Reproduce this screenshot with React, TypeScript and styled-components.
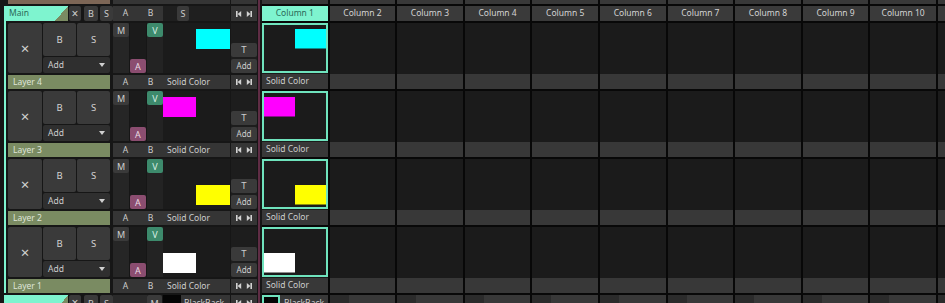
import styled, { createGlobalStyle } from "styled-components";

const mint = "#7ef4cf";
const mintEdge = "#6fe3bd";
const olive = "#7a8b62";
const keyGray = "#3a3a3a";
const barGray = "#353535";

const GlobalStyle = createGlobalStyle`
  body {
    margin: 0;
    background: #161616;
    overflow: hidden;
  }
`;

const Page = styled.div`
  display: flex;
  width: 945px;
  height: 303px;
  overflow: hidden;
  background: #161616;
  color: #cdcdcd;
  font-family: "Noto Sans", "Open Sans", sans-serif;
  font-size: 8.5px;
  line-height: 1;
`;

const LayerSide = styled.div`
  flex: 0 0 257px;
  display: flex;
  flex-direction: column;
  gap: 2px;
  overflow: hidden;
`;

const Divider = styled.div`
  flex: 0 0 2px;
  margin: 0 2px 0 1px;
  background: #5f2d45;
`;

const ClipSide = styled.div`
  flex: 1;
  min-width: 0;
  display: flex;
  flex-direction: column;
  gap: 2px;
  background: #080808;
  overflow: hidden;
`;

const Group = styled.div`
  flex-shrink: 0;
  margin-left: 4px;
  border-left: 2px solid ${mint};
  display: flex;
  flex-direction: column;
  gap: 2px;
`;

const LayerGrid = styled.div<{ $first?: number; $h?: number }>`
  flex-shrink: 0;
  display: grid;
  grid-template-columns: ${(p) => p.$first ?? 105}px 50px 68px 26px;
  ${(p) => (p.$h ? `height: ${p.$h}px; overflow: hidden;` : "")}
`;

const TopStrip = styled(LayerGrid)`
  padding-left: 8px;
`;

const LayerRow = styled(LayerGrid)`
  grid-template-rows: 50px 14px;
  row-gap: 2px;
  padding-left: 2px;
`;

/* layer controls */
const Controls = styled.div`
  display: grid;
  grid-template-columns: 34px 33px 33px;
  grid-template-rows: 33px 16px;
  gap: 1px;
  margin-right: 3px;
`;

const Key = styled.div<{ $tall?: boolean }>`
  grid-row: ${(p) => (p.$tall ? "span 2" : "auto")};
  display: flex;
  align-items: center;
  justify-content: center;
  background: ${keyGray};
  border-radius: 2px;
  font-size: ${(p) => (p.$tall ? "15px" : "9.5px")};
  color: #d2d2d2;
`;

const Select = styled.div`
  grid-column: 2 / span 2;
  display: flex;
  align-items: center;
  justify-content: space-between;
  padding: 0 5px;
  background: #2f2f2f;
  border-radius: 2px;
`;

const Caret = styled.span`
  width: 0;
  height: 0;
  border-left: 3px solid transparent;
  border-right: 3px solid transparent;
  border-top: 4px solid #d0d0d0;
`;

const Mixer = styled.div`
  display: grid;
  grid-template-columns: 16px 16px 16px;
  gap: 1px;
`;

const Strip = styled.div<{ $bg: string; $end?: boolean }>`
  display: flex;
  flex-direction: column;
  justify-content: ${(p) => (p.$end ? "flex-end" : "flex-start")};
  background: ${(p) => p.$bg};
`;

const Toggle = styled.div<{ $bg: string; $fg?: string }>`
  height: 14px;
  display: flex;
  align-items: center;
  justify-content: center;
  background: ${(p) => p.$bg};
  color: ${(p) => p.$fg ?? "#cfcfcf"};
  border-radius: 2px;
  font-size: 9px;
`;

const Preview = styled.div`
  margin-right: 1px;
  background: #1b1b1b;
  svg {
    display: block;
  }
`;

const Side = styled.div`
  display: flex;
  flex-direction: column;
  justify-content: flex-end;
  gap: 2px;
  background: #1d1d1d;
`;

const SideKey = styled.div<{ $small?: boolean }>`
  height: 14px;
  display: flex;
  align-items: center;
  justify-content: center;
  background: ${keyGray};
  border-radius: 2px;
  font-size: ${(p) => (p.$small ? "8px" : "9.5px")};
`;

/* bottom bar of a layer */
const NameBar = styled.div<{ $bg: string }>`
  margin-right: 3px;
  display: flex;
  align-items: center;
  padding-left: 5px;
  background: ${(p) => p.$bg};
  color: #dfe5d8;
`;

const SplitBar = styled.div`
  display: flex;
  background: ${barGray};
  span {
    flex: 1;
    display: flex;
    align-items: center;
    justify-content: center;
  }
`;

const LabelBar = styled.div`
  margin-right: 1px;
  display: flex;
  align-items: center;
  padding-left: 4px;
  background: ${barGray};
`;

const Transport = styled.div`
  display: flex;
  align-items: center;
  justify-content: center;
  background: ${barGray};
`;

const Plain = styled.div<{ $bg: string; $mr?: number }>`
  background: ${(p) => p.$bg};
  margin-right: ${(p) => p.$mr ?? 0}px;
`;

/* group header */
const Tools = styled.div`
  display: flex;
  margin-right: 3px;
`;

const MainTab = styled.div<{ $w: number }>`
  flex: 0 0 ${(p) => p.$w}px;
  display: flex;
  align-items: center;
  padding-left: 3px;
  background: ${mint};
  color: #2b6a58;
`;

const TabCorner = styled.span`
  margin-left: auto;
  align-self: stretch;
  width: 13px;
  background: linear-gradient(to bottom right, transparent 50%, ${olive} 50%);
`;

const MiniKey = styled.div<{ $w: number; $ml?: number; $big?: boolean }>`
  flex: 0 0 ${(p) => p.$w}px;
  margin-left: ${(p) => p.$ml ?? 0}px;
  display: flex;
  align-items: center;
  justify-content: center;
  background: ${keyGray};
  border-radius: 2px;
  font-size: ${(p) => (p.$big ? "12px" : "9px")};
`;

const HeaderMid = styled.div`
  display: flex;
  margin-right: 1px;
  background: #1f1f1f;
`;

const MiniBlock = styled.div<{ $w?: number; $bg: string; $border?: boolean }>`
  ${(p) => (p.$w ? `flex: 0 0 ${p.$w}px;` : "flex: 1;")}
  box-sizing: border-box;
  display: flex;
  align-items: center;
  padding-left: ${(p) => (p.$w ? 0 : 3)}px;
  background: ${(p) => p.$bg};
  border: ${(p) => (p.$border ? `2px solid ${mintEdge}` : "none")};
`;

/* clip grid */
const ClipGrid = styled.div<{ $h: number }>`
  flex-shrink: 0;
  display: grid;
  grid-template-columns: repeat(11, 65.6px);
  column-gap: 2px;
  height: ${(p) => p.$h}px;
  overflow: hidden;
`;

const TopCell = styled.div`
  background: #383838;
`;

const ColumnHead = styled.div<{ $active?: boolean }>`
  display: flex;
  align-items: center;
  justify-content: center;
  white-space: nowrap;
  background: ${(p) => (p.$active ? mint : "#3a3a3a")};
  color: ${(p) => (p.$active ? "#2b6a58" : "#d4d4d4")};
`;

const ClipCell = styled.div`
  display: flex;
  flex-direction: column;
  background: #1b1b1b;
`;

const ClipBody = styled.div`
  flex: 1;
`;

const Thumb = styled.div`
  height: 50px;
  margin-bottom: 1px;
  box-sizing: border-box;
  border: 2px solid ${mintEdge};
  background: #1b1b1b;
  svg {
    display: block;
  }
`;

const ClipName = styled.div`
  height: 15px;
  display: flex;
  align-items: center;
  padding-left: 4px;
  background: #383838;
`;

const MiniClip = styled.div`
  display: flex;
  gap: 1px;
  background: #383838;
`;

const SkipIcons = () => (
  <svg width="16" height="6" viewBox="0 0 16 6">
    <rect x="0" y="0" width="1.6" height="6" fill="#d2d2d2" />
    <polygon points="5.2,0 1.6,3 5.2,6" fill="#d2d2d2" />
    <polygon points="10.8,0 14.4,3 10.8,6" fill="#d2d2d2" />
    <rect x="14.4" y="0" width="1.6" height="6" fill="#d2d2d2" />
  </svg>
);

type Layer = { name: string; color: string; right: boolean; bottom: boolean };

const layers: Layer[] = [
  { name: "Layer 4", color: "#00ffff", right: true, bottom: false },
  { name: "Layer 3", color: "#ff00ff", right: false, bottom: false },
  { name: "Layer 2", color: "#ffff00", right: true, bottom: true },
  { name: "Layer 1", color: "#ffffff", right: false, bottom: true },
];

const columns = Array.from({ length: 11 }, (_, i) => `Column ${i + 1}`);

const LayerPanel = ({ layer }: { layer: Layer }) => (
  <LayerRow>
    <Controls>
      <Key $tall>×</Key>
      <Key>B</Key>
      <Key>S</Key>
      <Select>
        <span>Add</span>
        <Caret />
      </Select>
    </Controls>
    <Mixer>
      <Strip $bg="#262626">
        <Toggle $bg={keyGray}>M</Toggle>
      </Strip>
      <Strip $bg="#1b1b1b" $end>
        <Toggle $bg="#8b4d70" $fg="#eadbe3">A</Toggle>
      </Strip>
      <Strip $bg="#232323">
        <Toggle $bg="#3d8a6c" $fg="#d8f0e6">V</Toggle>
      </Strip>
    </Mixer>
    <Preview>
      <svg width="67" height="50">
        <rect
          x={layer.right ? 33 : 0}
          y={layer.bottom ? 26 : 6}
          width={layer.right ? 34 : 33}
          height="20"
          fill={layer.color}
        />
      </svg>
    </Preview>
    <Side>
      <SideKey>T</SideKey>
      <SideKey $small>Add</SideKey>
    </Side>
    <NameBar $bg={olive}>{layer.name}</NameBar>
    <SplitBar>
      <span>A</span>
      <span>B</span>
    </SplitBar>
    <LabelBar>Solid Color</LabelBar>
    <Transport>
      <SkipIcons />
    </Transport>
  </LayerRow>
);

const ClipRow = ({ layer }: { layer: Layer }) => (
  <ClipGrid $h={66}>
    {columns.map((c, i) => (
      <ClipCell key={c}>
        {i === 0 ? (
          <Thumb>
            <svg width="62" height="46">
              <rect
                x={layer.right ? 31 : 0}
                y={layer.bottom ? 24 : 4}
                width="31"
                height="19.5"
                fill={layer.color}
              />
            </svg>
          </Thumb>
        ) : (
          <ClipBody />
        )}
        <ClipName>{i === 0 ? "Solid Color" : ""}</ClipName>
      </ClipCell>
    ))}
  </ClipGrid>
);

const App = () => {
  return (
    <Page>
      <GlobalStyle />
      <LayerSide>
        <TopStrip $h={4}>
          <Plain $bg="#7d6656" $mr={3} />
          <Plain $bg={barGray} />
          <Plain $bg={barGray} $mr={1} />
          <Plain $bg={barGray} />
        </TopStrip>
        <Group>
          <LayerGrid $first={107} $h={15}>
            <Tools>
              <MainTab $w={59}>
                Main
                <TabCorner />
              </MainTab>
              <MiniKey $w={12} $ml={1} $big>×</MiniKey>
              <MiniKey $w={14} $ml={3}>B</MiniKey>
              <MiniKey $w={13} $ml={2}>S</MiniKey>
            </Tools>
            <SplitBar>
              <span>A</span>
              <span>B</span>
            </SplitBar>
            <HeaderMid>
              <MiniKey $w={12} $ml={14}>S</MiniKey>
            </HeaderMid>
            <Transport>
              <SkipIcons />
            </Transport>
          </LayerGrid>
          {layers.map((l) => (
            <LayerPanel key={l.name} layer={l} />
          ))}
        </Group>
        <Group>
          <LayerGrid $first={107} $h={16}>
            <Tools>
              <MainTab $w={59}>
                <TabCorner />
              </MainTab>
              <MiniKey $w={12} $ml={1} $big>×</MiniKey>
              <MiniKey $w={14} $ml={3}>B</MiniKey>
              <MiniKey $w={13} $ml={2}>S</MiniKey>
            </Tools>
            <HeaderMid>
              <MiniBlock $bg="#2a2a2a" />
              <MiniKey $w={15}>M</MiniKey>
            </HeaderMid>
            <HeaderMid>
              <MiniBlock $w={18} $bg="#050505" />
              <MiniBlock $bg={barGray}>BlackBack</MiniBlock>
            </HeaderMid>
            <Transport>
              <SkipIcons />
            </Transport>
          </LayerGrid>
        </Group>
      </LayerSide>
      <Divider />
      <ClipSide>
        <ClipGrid $h={4}>
          {columns.map((c) => (
            <TopCell key={c} />
          ))}
        </ClipGrid>
        <ClipGrid $h={15}>
          {columns.map((c, i) => (
            <ColumnHead key={c} $active={i === 0}>
              {c}
            </ColumnHead>
          ))}
        </ClipGrid>
        {layers.map((l) => (
          <ClipRow key={l.name} layer={l} />
        ))}
        <ClipGrid $h={16}>
          {columns.map((c, i) => (
            <MiniClip key={c}>
              <MiniBlock
                $w={i === 0 ? 18 : 19}
                $bg={i === 0 ? "#050505" : "#2b2b2b"}
                $border={i === 0}
              />
              <MiniBlock $bg="#383838">{i === 0 ? "BlackBack" : ""}</MiniBlock>
            </MiniClip>
          ))}
        </ClipGrid>
      </ClipSide>
    </Page>
  );
};

export default App;
